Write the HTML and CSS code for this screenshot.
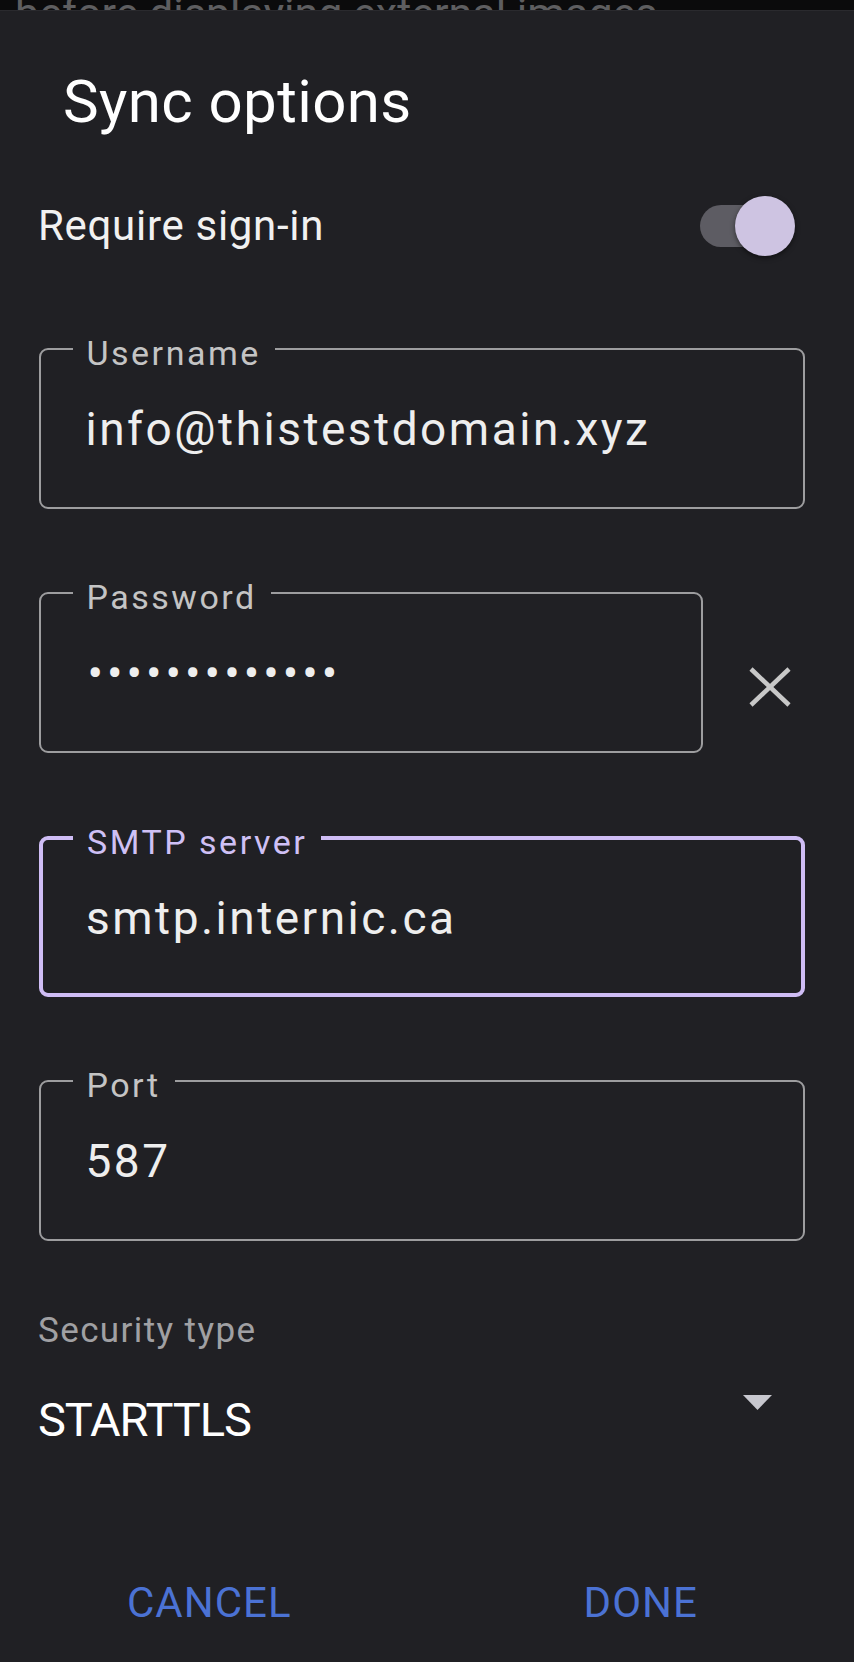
FILE: index.html
```html
<!DOCTYPE html>
<html lang="en">
<head>
<meta charset="utf-8">
<title>Sync options</title>
<link rel="stylesheet" href="styles.css">
</head>
<body>
<div class="behind"><div class="behind-text">before displaying external images</div></div>
<div class="dialog">
  <h1 class="title">Sync options</h1>
  <div class="switch-row">
    <span class="switch-label">Require sign-in</span>
    <span class="switch"><span class="track"></span><span class="knob"></span></span>
  </div>
  <div class="fields">
    <div class="field">
      <span class="field-label">Username</span>
      <span class="field-value">info@thistestdomain.xyz</span>
    </div>
    <div class="field-row">
      <div class="field field-narrow">
        <span class="field-label">Password</span>
        <span class="field-value dots">•••••••••••••</span>
      </div>
      <svg class="clear-icon" viewBox="0 0 42 40" aria-label="Clear">
        <line x1="2" y1="2" x2="40" y2="38"/>
        <line x1="40" y1="2" x2="2" y2="38"/>
      </svg>
    </div>
    <div class="field field-focused">
      <span class="field-label">SMTP server</span>
      <span class="field-value">smtp.internic.ca</span>
    </div>
    <div class="field">
      <span class="field-label">Port</span>
      <span class="field-value">587</span>
    </div>
  </div>
  <div class="select-label">Security type</div>
  <div class="select-row">
    <span class="select-value">STARTTLS</span>
    <svg class="caret" viewBox="0 0 29 15"><polygon points="0,0 29,0 14.5,15"/></svg>
  </div>
  <div class="actions">
    <span class="btn btn-cancel">CANCEL</span>
    <span class="btn btn-done">DONE</span>
  </div>
</div>
</body>
</html>
```
FILE: styles.css
```css
html, body {
  margin: 0;
  padding: 0;
  background: #202024;
}
body {
  width: 854px;
  font-family: Roboto, "Noto Sans", Arial, sans-serif;
}
.behind {
  height: 10px;
  background: #0b0b0c;
  overflow: hidden;
}
.behind-text {
  font-size: 43px;
  line-height: 43px;
  margin-top: -8px;
  padding-left: 15px;
  color: #5e5e60;
  white-space: nowrap;
}
.dialog {
  background: #202024;
  border-top: 1px solid #2a2a2e;
  padding: 55px 49px 0 36px;
  min-height: 1652px;
  box-sizing: border-box;
}
.title {
  margin: 0 0 0 27px;
  font-size: 60px;
  line-height: 72px;
  font-weight: 400;
  color: #ffffff;
  letter-spacing: 0.4px;
}
.switch-row {
  display: flex;
  align-items: center;
  justify-content: space-between;
  height: 60px;
  margin-top: 57.6px;
  padding-right: 10px;
}
.switch-label {
  font-size: 42px;
  color: #f1f1f1;
  letter-spacing: 0.7px;
  margin-left: 2px;
}
.switch {
  position: relative;
  width: 95px;
  height: 60px;
}
.track {
  position: absolute;
  left: 0;
  top: 9px;
  width: 88px;
  height: 42px;
  border-radius: 21px;
  background: #5d5c63;
}
.knob {
  position: absolute;
  right: 0;
  top: 0;
  width: 60px;
  height: 60px;
  border-radius: 50%;
  background: #cec4e2;
  box-shadow: 0 2px 5px rgba(0, 0, 0, 0.5);
}
.fields {
  display: flex;
  flex-direction: column;
  gap: 83px;
  margin: 92.4px 0 0 3px;
}
.field {
  position: relative;
  box-sizing: border-box;
  height: 161px;
  border: 2.5px solid #9d9d9f;
  border-radius: 9px;
  padding: 0 0 0 44.5px;
}
.field-label {
  position: absolute;
  top: -16.5px;
  left: 31.5px;
  padding: 0 14px 0 14px;
  background: #202024;
  font-size: 34px;
  line-height: 40px;
  color: #c4c4c4;
  letter-spacing: 2.5px;
  white-space: nowrap;
}
.field-value {
  display: block;
  padding-top: 53.5px;
  font-size: 46px;
  line-height: 52px;
  color: #eeeeee;
  letter-spacing: 2.5px;
  white-space: nowrap;
}
.dots {
  letter-spacing: 4px;
  padding-left: 2px;
}
.field-row {
  display: flex;
  align-items: flex-start;
}
.field-narrow {
  width: 664px;
  flex: none;
}
.clear-icon {
  margin-left: 46px;
  margin-top: 75px;
  width: 42px;
  height: 40px;
  stroke: #c8c8c8;
  stroke-width: 4.5;
}
.field-focused {
  border: 4px solid #cfbdf5;
  padding-left: 43px;
}
.field-focused .field-label {
  left: 30px;
  top: -18px;
  color: #cfc0f5;
}
.field-focused .field-value {
  padding-top: 52px;
}
.select-label {
  margin-top: 69px;
  font-size: 35px;
  line-height: 42px;
  color: #a0a0a3;
  letter-spacing: 1.4px;
  margin-left: 2px;
}
.select-row {
  display: flex;
  justify-content: space-between;
  align-items: flex-start;
  margin-top: 40px;
  padding-right: 33px;
}
.select-value {
  font-size: 47px;
  line-height: 56px;
  color: #ffffff;
  letter-spacing: -1.1px;
  margin-left: 2px;
}
.caret {
  width: 29px;
  height: 15px;
  margin-top: 3px;
  fill: #c7c7ce;
}
.actions {
  display: flex;
  margin: 124.6px -49px 0 -36px;
}
.btn {
  flex: 1;
  text-align: center;
  font-size: 42px;
  line-height: 60px;
  color: #4b72d4;
  letter-spacing: 1px;
}
.btn-cancel {
  padding-right: 13px;
}
.btn-done {
  padding-right: 4px;
}
```
